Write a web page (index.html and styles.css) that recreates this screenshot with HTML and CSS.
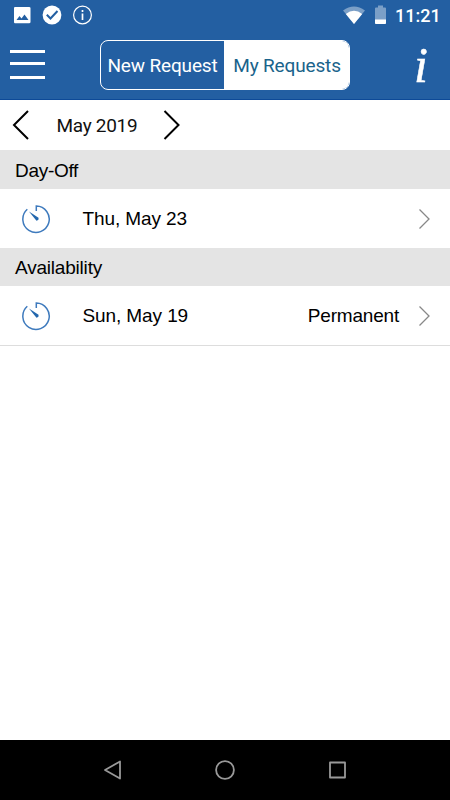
FILE: index.html
```html
<!DOCTYPE html>
<html lang="en">

<head>
    <meta charset="UTF-8">
    <title>My Requests</title>
    <link rel="stylesheet" href="styles.css">
</head>

<body>
    <div id="container">
        <div class="status-bar">
            <div class="status-left">
                <svg width="18" height="18" viewBox="0 0 18 18">
                    <path fill="#fff" fill-rule="evenodd" d="M2 1h14q1.500 0 1.500 1v14q0 1.200-1.500 1.200H2q-1 0-1-1.200V2q0-1 1-1zM3.500 14h12l-4-5.500-3 4-2-2.500z"/>
                </svg>
                <svg width="20" height="20" viewBox="0 0 20 20">
                    <circle cx="10" cy="10" r="9.400" fill="#fff"/>
                    <path d="M4.800 9.800l3.700 3.700L15.500 6" fill="none" stroke="#235fa2" stroke-width="2"/>
                </svg>
                <svg width="20" height="20" viewBox="0 0 20 20">
                    <circle cx="10.500" cy="10" r="8.900" fill="none" stroke="#fff" stroke-width="1.200"/>
                    <path d="M10.500 5v2M10.500 8.500v6.500" stroke="#fff" stroke-width="1.700"/>
                </svg>
            </div>
            <div class="status-right">
                <svg class="wifi" width="22" height="18" viewBox="0 0 22 18">
                    <path d="M0 4.500Q11-3.500 22 4.500L11 18z" fill="#7b9fc7"/>
                    <path d="M2.800 8Q11 1.500 19.200 8L11 18z" fill="#fff"/>
                </svg>
                <svg class="battery" width="11" height="20" viewBox="0 0 11 20">
                    <path d="M3 .5h5v2h2q1 0 1 1V18q0 1-1 1H1q-1 0-1-1V3.500q0-1 1-1h2z" fill="#7b9fc7"/>
                    <path d="M0 14.500h11V18q0 1-1 1H1q-1 0-1-1z" fill="#fff"/>
                </svg>
                <span class="time">11:21</span>
            </div>
        </div>
        <div class="header">
            <div class="menu">
                <span></span>
                <span></span>
                <span></span>
            </div>
            <ul class="tabs">
                <li>New Request</li>
                <li class="current">My Requests</li>
            </ul>
            <div class="info">i</div>
        </div>
        <div class="month">
            <svg width="18" height="30" viewBox="0 0 18 30"><path d="M16 1L2 15l14 14"/></svg>
            <span>May 2019</span>
            <svg width="18" height="30" viewBox="0 0 18 30"><path d="M1.500 1l14 14-14 14"/></svg>
        </div>
        <div class="title">Day-Off</div>
        <div class="row">
            <svg class="clock" width="30" height="30" viewBox="0 0 30 30">
                <path d="M15.300 7V2A13.200 13.200 0 1 1 6.300 5.300"/>
                <path class="hand" d="M8 7.500l9.500 6.300q.6 2.600-2 2.900z"/>
            </svg>
            <span class="date">Thu, May 23</span>
            <span class="type"></span>
            <svg class="arrow" width="12" height="20" viewBox="0 0 12 20"><path d="M.5 .5L10 10 .5 19.500"/></svg>
        </div>
        <div class="title">Availability</div>
        <div class="row last">
            <svg class="clock" width="30" height="30" viewBox="0 0 30 30">
                <path d="M15.300 7V2A13.200 13.200 0 1 1 6.300 5.300"/>
                <path class="hand" d="M8 7.500l9.500 6.300q.6 2.600-2 2.900z"/>
            </svg>
            <span class="date">Sun, May 19</span>
            <span class="type">Permanent</span>
            <svg class="arrow" width="12" height="20" viewBox="0 0 12 20"><path d="M.5 .5L10 10 .5 19.500"/></svg>
        </div>
        <div class="nav">
            <svg width="20" height="20" viewBox="0 0 20 20"><path d="M17 1.500v17L2 10z"/></svg>
            <svg width="20" height="20" viewBox="0 0 20 20"><circle cx="10" cy="10" r="8.900"/></svg>
            <svg width="20" height="20" viewBox="0 0 20 20"><rect x="2" y="2.500" width="15" height="15"/></svg>
        </div>
    </div>
</body>

</html>
```
FILE: styles.css
```css
* {
    margin: 0;
    padding: 0;
    box-sizing: border-box;
}

body {
    background: #fff;
    font-family: "Liberation Sans", Arial, sans-serif;
    font-size: 19px;
    color: #000;
}

ul {
    list-style: none;
}

svg {
    display: block;
    flex: none;
}

#container {
    display: flex;
    flex-direction: column;
    height: 800px;
    overflow: hidden;
}

.status-bar {
    display: flex;
    justify-content: space-between;
    align-items: center;
    height: 30px;
    padding: 0 10px 0 13px;
    background: #235fa2;
}

.status-left,
.status-right {
    display: flex;
    align-items: center;
}

.status-left {
    gap: 11px;
}

.status-left svg:last-child {
    margin-left: -1px;
}

.battery {
    margin-left: 10px;
}

.time {
    width: 45px;
    margin-left: 9px;
    font-family: Roboto, sans-serif;
    font-size: 18px;
    font-weight: 500;
    line-height: 30px;
    padding-top: 2px;
    color: #fff;
    white-space: nowrap;
}

.header {
    display: flex;
    align-items: center;
    height: 70px;
    padding: 0 22px 0 10px;
    background: #235fa2;
    border-bottom: 1px solid #0d4a98;
}

.menu {
    display: flex;
    flex-direction: column;
    gap: 9px;
    width: 35px;
}

.menu span {
    height: 3px;
    background: #fff;
}

.menu span:last-child {
    margin-top: 2px;
}

.tabs {
    display: flex;
    width: 250px;
    height: 50px;
    margin-left: 55px;
    border: 1.500px solid #fff;
    border-radius: 8px;
    overflow: hidden;
    font-family: Roboto, sans-serif;
    font-size: 19px;
    line-height: 49px;
    letter-spacing: -.15px;
    text-align: center;
    white-space: nowrap;
    color: #fff;
}

.tabs li {
    width: 123px;
}

.tabs .current {
    width: 125px;
    padding-left: 1px;
    background: #fff;
    color: #1a638b;
}

.info {
    margin-left: auto;
    width: 14px;
    font-family: "Liberation Serif", serif;
    font-size: 50px;
    font-style: italic;
    line-height: 70px;
    color: #fff;
    -webkit-text-stroke: .5px #fff;
}

.month {
    display: flex;
    align-items: center;
    height: 50px;
    padding-left: 12px;
    font-family: Roboto, sans-serif;
    letter-spacing: -.3px;
    color: #111;
}

.month span {
    width: 133px;
    padding: 2px 0 0 26.500px;
    line-height: 48px;
}

.month path {
    fill: none;
    stroke: #000;
    stroke-width: 2;
}

.title {
    height: 39px;
    padding-left: 15px;
    line-height: 42px;
    letter-spacing: -.3px;
    background: #e4e4e4;
}

.row {
    display: flex;
    align-items: center;
    height: 59px;
    padding: 0 19px 0 21px;
}

.row + .title {
    height: 38px;
    line-height: 40px;
    letter-spacing: -.2px;
}

.row.last {
    height: 60px;
    border-bottom: 1px solid #ddd;
}

.clock path {
    fill: none;
    stroke: #3e7abd;
    stroke-width: 1.500;
}

.clock .hand {
    fill: #2367ad;
    stroke: none;
}

.date {
    margin-left: 31.500px;
    letter-spacing: -.1px;
}

.type {
    margin-left: auto;
    margin-right: 20px;
    letter-spacing: -.2px;
}

.arrow path {
    fill: none;
    stroke: #888;
    stroke-width: 1.300;
}

.nav {
    display: flex;
    justify-content: center;
    align-items: center;
    gap: 92.500px;
    height: 60px;
    margin-top: auto;
    background: #000;
}

.nav svg * {
    fill: none;
    stroke: #999;
    stroke-width: 1.800;
    stroke-linejoin: round;
}
```
